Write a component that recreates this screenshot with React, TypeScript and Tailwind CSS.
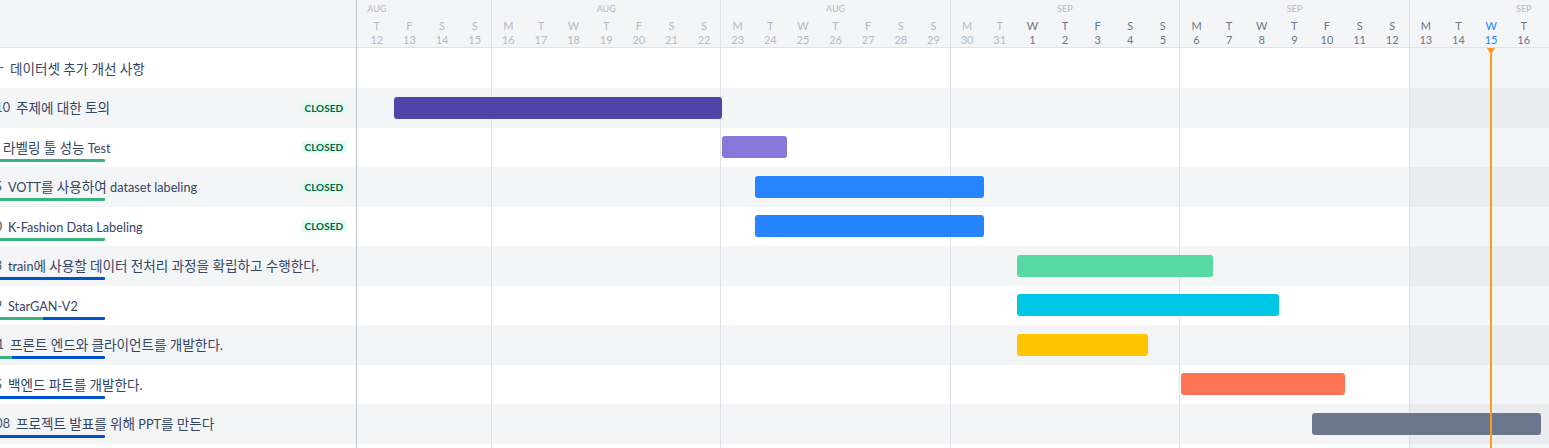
import React from "react";

const DW = 229.4 / 7;

type Row = {
  key: string;
  kw: string;
  text: string;
  closed: boolean;
  prog: { g: number; b: number } | null;
  bar: { s: number; e: number; c: string } | null;
};

const rows: Row[] = [
  { key: "-", kw: "w-[4px] mr-[6px]", text: "데이터셋 추가 개선 사항", closed: false, prog: null, bar: null },
  { key: "10", kw: "w-[10px] mr-[6px]", text: "주제에 대한 토의", closed: true, prog: null, bar: { s: 4, e: 14, c: "#5243aa" } },
  { key: "", kw: "w-[0px] mr-[3px]", text: "라벨링 툴 성능 Test", closed: true, prog: { g: 105, b: 0 }, bar: { s: 14, e: 16, c: "#8777d9" } },
  { key: "15", kw: "w-[2px] mr-[6px]", text: "VOTT를 사용하여 dataset labeling", closed: true, prog: { g: 105, b: 0 }, bar: { s: 15, e: 22, c: "#2684ff" } },
  { key: "20", kw: "w-[2px] mr-[6px]", text: "K-Fashion Data Labeling", closed: true, prog: { g: 105, b: 0 }, bar: { s: 15, e: 22, c: "#2684ff" } },
  { key: "23", kw: "w-[2px] mr-[6px]", text: "train에 사용할 데이터 전처리 과정을 확립하고 수행한다.", closed: false, prog: { g: 0, b: 105 }, bar: { s: 23, e: 29, c: "#57d9a3" } },
  { key: "19", kw: "w-[2px] mr-[6px]", text: "StarGAN-V2", closed: false, prog: { g: 43, b: 62 }, bar: { s: 23, e: 31, c: "#00c7e6" } },
  { key: "21", kw: "w-[4px] mr-[6px]", text: "프론트 엔드와 클라이언트를 개발한다.", closed: false, prog: { g: 12, b: 93 }, bar: { s: 23, e: 27, c: "#ffc400" } },
  { key: "25", kw: "w-[2px] mr-[6px]", text: "백엔드 파트를 개발한다.", closed: false, prog: { g: 0, b: 105 }, bar: { s: 28, e: 33, c: "#ff7452" } },
  { key: "108", kw: "w-[10px] mr-[6px]", text: "프로젝트 발표를 위해 PPT를 만든다", closed: false, prog: { g: 0, b: 105 }, bar: { s: 32, e: 39, c: "#6b778c" } },
];

const rowH = (i: number) => (i === 0 ? 40 : 39.5);
const rowTop = (i: number) => (i === 0 ? 0 : 40 + (i - 1) * 39.5);

const letters = ["M", "T", "W", "T", "F", "S", "S"];
const weeks = [
  { month: "AUG", days: [9, 10, 11, 12, 13, 14, 15], cur: false, startSep: 99 },
  { month: "AUG", days: [16, 17, 18, 19, 20, 21, 22], cur: false, startSep: 99 },
  { month: "AUG", days: [23, 24, 25, 26, 27, 28, 29], cur: false, startSep: 99 },
  { month: "SEP", days: [30, 31, 1, 2, 3, 4, 5], cur: false, startSep: 2 },
  { month: "SEP", days: [6, 7, 8, 9, 10, 11, 12], cur: false, startSep: 0 },
  { month: "SEP", days: [13, 14, 15, 16, 17, 18, 19], cur: true, startSep: 0 },
];

function dayColor(w: number, d: number) {
  const wk = weeks[w];
  if (wk.cur && d === 2) return "text-[#2684ff]";
  if (d >= wk.startSep) return "text-[#6b778c]";
  return "text-[#b3bac5]";
}

function MixedText({ text }: { text: string }) {
  const parts = text.split(/([\uAC00-\uD7A3]+)/).filter((p) => p.length > 0);
  return (
    <span className="whitespace-nowrap leading-[16px] text-[#344563]">
      {parts.map((p, i) =>
        /[\uAC00-\uD7A3]/.test(p) ? (
          <span key={i} className="text-[13.6px]">
            {p}
          </span>
        ) : (
          <span key={i} className="text-[12.7px]">
            {p}
          </span>
        )
      )}
    </span>
  );
}

export default function App() {
  return (
    <div className="w-[1549px] h-[448px] overflow-hidden flex bg-white font-['Lato','Noto_Sans_CJK_KR',sans-serif] text-[#172b4d]">
      {/* Left panel */}
      <div className="w-[357px] shrink-0 border-r border-[#c1c7d0] flex flex-col">
        <div className="h-[48px] shrink-0 bg-[#f4f5f7] border-b border-[#dfe1e6]" />
        {rows.map((r, i) => (
          <div
            key={i}
            className={`relative shrink-0 flex items-center ${i === 0 ? "h-[40px]" : "h-[39.5px]"} ${i % 2 === 1 ? "bg-[#f4f5f7]" : "bg-white"}`}
          >
            <span className={`${r.kw} shrink-0 flex justify-end overflow-hidden whitespace-nowrap text-[12.7px] text-[#42526e]`}>
              <span className="shrink-0">{r.key}</span>
            </span>
            <MixedText text={r.text} />
            {r.closed && (
              <span className="ml-auto mr-[9px] h-[12px] px-[4px] rounded-[3px] bg-[#e3fcef] text-[#006644] text-[10px] font-bold leading-[12px]">
                CLOSED
              </span>
            )}
            {r.prog && (
              <div className="absolute left-0 top-[31px] h-[3px] w-[105px] flex rounded-r-[1px] overflow-hidden">
                {r.prog.g > 0 && <div className="h-full bg-[#36b37e]" style={{ width: r.prog.g }} />}
                {r.prog.b > 0 && <div className="h-full bg-[#0052cc]" style={{ width: r.prog.b }} />}
              </div>
            )}
          </div>
        ))}
        <div className="flex-1 bg-white" />
      </div>

      {/* Timeline */}
      <div className="flex-1 overflow-hidden">
        <div className="relative w-[1376.4px] ml-[-95.4px] flex flex-col">
          {/* Header */}
          <div className="flex h-[48px] bg-[#f4f5f7] border-b border-[#dfe1e6]">
            {weeks.map((w, wi) => (
              <div key={wi} className="w-[229.4px] shrink-0 border-l border-[#dfe1e6] flex flex-col">
                <div className="h-[18px] leading-[18px] text-center text-[9px] text-[#b3bac5]">{w.month}</div>
                <div className="grid grid-cols-7 h-[15px] leading-[15px] text-[11px] text-center">
                  {letters.map((l, di) => (
                    <span key={di} className={dayColor(wi, di)}>
                      {l}
                    </span>
                  ))}
                </div>
                <div className="grid grid-cols-7 h-[14px] leading-[14px] text-[11px] text-center">
                  {w.days.map((d, di) => (
                    <span key={di} className={dayColor(wi, di)}>
                      {d}
                    </span>
                  ))}
                </div>
              </div>
            ))}
          </div>

          {/* Body */}
          <div className="relative flex h-[400px]">
            {weeks.map((w, wi) => (
              <div key={wi} className="w-[229.4px] shrink-0 border-l border-[#dfe1e6] flex flex-col">
                {Array.from({ length: 11 }).map((_, ri) => (
                  <div
                    key={ri}
                    className={`shrink-0 ${ri === 0 ? "h-[40px]" : "h-[39.5px]"} ${
                      w.cur
                        ? ri % 2 === 1
                          ? "bg-[#ebecf0]"
                          : "bg-[#f4f5f7]"
                        : ri % 2 === 1
                        ? "bg-[#f4f5f7]"
                        : "bg-white"
                    }`}
                  />
                ))}
              </div>
            ))}

            {/* Bars */}
            {rows.map((r, i) =>
              r.bar ? (
                <div
                  key={i}
                  className="absolute h-[22px] rounded-[3px]"
                  style={{
                    left: 1.5 + r.bar.s * DW,
                    width: (r.bar.e - r.bar.s) * DW,
                    top: rowTop(i) + (rowH(i) - 22) / 2,
                    backgroundColor: r.bar.c,
                  }}
                />
              ) : null
            )}

            {/* Today marker */}
            <div className="absolute top-0 bottom-0 w-[8px] flex flex-col items-center" style={{ left: 37.5 * DW - 4 }}>
              <svg width="8" height="7" viewBox="0 0 8 7" className="shrink-0">
                <polygon points="0,0 8,0 4,7" fill="#ff991f" />
              </svg>
              <div className="w-[2px] flex-1 bg-[#ff991f] -mt-[1px]" />
            </div>
          </div>
        </div>
      </div>
    </div>
  );
}
